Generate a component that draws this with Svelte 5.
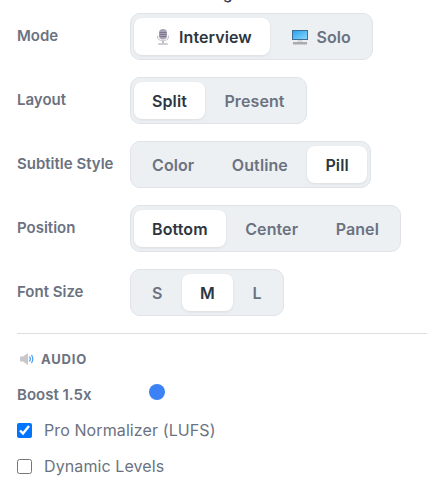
<script lang="ts">
  type Opt = { label: string; icon?: 'mic' | 'monitor' }
  type Row = { name: string; options: Opt[]; active: string }

  let rows = $state<Row[]>([
    {
      name: 'Mode',
      options: [
        { label: 'Interview', icon: 'mic' },
        { label: 'Solo', icon: 'monitor' },
      ],
      active: 'Interview',
    },
    {
      name: 'Layout',
      options: [{ label: 'Split' }, { label: 'Present' }],
      active: 'Split',
    },
    {
      name: 'Subtitle Style',
      options: [{ label: 'Color' }, { label: 'Outline' }, { label: 'Pill' }],
      active: 'Pill',
    },
    {
      name: 'Position',
      options: [{ label: 'Bottom' }, { label: 'Center' }, { label: 'Panel' }],
      active: 'Bottom',
    },
    {
      name: 'Font Size',
      options: [{ label: 'S' }, { label: 'M' }, { label: 'L' }],
      active: 'M',
    },
  ])

  let boost = $state(1.5)
  let normalizer = $state(true)
  let dynamicLevels = $state(false)
</script>

<div class="panel">
  <h2 class="title">Settings</h2>

  {#each rows as row}
    <div class="row">
      <span class="label">{row.name}</span>
      <div class="group">
        {#each row.options as opt}
          <button
            class="seg"
            class:active={row.active === opt.label}
            onclick={() => (row.active = opt.label)}
          >
            {#if opt.icon === 'mic'}
              <svg width="22" height="18" viewBox="0 0 22 18" aria-hidden="true">
                <path d="M5 8.500c0 3 2.500 4.600 6 4.600s6-1.600 6-4.600v-1h-1v1c0 2.400-2 3.700-5 3.700s-5-1.300-5-3.700v-1H5z" fill="#c9c6cf" />
                <rect x="7" y="1" width="8" height="10.500" rx="4" fill="#a8a3b5" />
                <path d="M7.500 4.500h7M7.500 6.500h7M7.500 8.500h7" stroke="#7d7689" stroke-width="1" />
                <rect x="10" y="13" width="2" height="2" fill="#bdbac4" />
                <rect x="6" y="15" width="10" height="2" rx="1" fill="#cfcdd4" />
              </svg>
            {:else if opt.icon === 'monitor'}
              <svg width="22" height="16" viewBox="0 0 22 16" aria-hidden="true">
                <defs>
                  <linearGradient id="screen" x1="0" y1="0" x2="1" y2="1">
                    <stop offset="0" stop-color="#29a4ee" />
                    <stop offset="1" stop-color="#8ad4fa" />
                  </linearGradient>
                </defs>
                <rect x="3" y="1" width="16" height="10" fill="#3f6f93" />
                <rect x="4" y="2" width="14" height="8" fill="url(#screen)" />
                <rect x="8.500" y="11" width="5" height="2" fill="#d5d8dc" />
                <rect x="4" y="13" width="14" height="2.500" fill="#a9aab3" />
              </svg>
            {/if}
            {opt.label}
          </button>
        {/each}
      </div>
    </div>
  {/each}

  <hr />

  <h3 class="section">
    <svg width="20" height="14" viewBox="0 0 20 14" aria-hidden="true">
      <path d="M3 4.500h3L11 1v12L6 9.500H3z" fill="#c8c8cc" />
      <path d="M12.500 4.500c1 1.500 1 3.500 0 5M14.500 3c1.600 2.500 1.600 5.500 0 8" fill="none" stroke="#4a9af0" stroke-width="1.200" />
    </svg>
    AUDIO
  </h3>

  <label class="boost">
    <span class="boost-label">Boost {boost}x</span>
    <input type="range" min="1" max="2" step="0.1" bind:value={boost} />
  </label>

  <label class="check">
    <input type="checkbox" bind:checked={normalizer} />
    Pro Normalizer (LUFS)
  </label>
  <label class="check">
    <input type="checkbox" bind:checked={dynamicLevels} />
    Dynamic Levels
  </label>
</div>

<style>
  :global(body) {
    background: #fff;
    overflow: hidden;
  }
  .panel {
    padding: 0 6px 0 17px;
    font-family: Inter, 'Liberation Sans', sans-serif;
    color: #6b7280;
  }
  .title {
    margin: -15px 0 10px;
    padding-right: 22px;
    height: 18px;
    font-size: 15px;
    line-height: 18px;
    font-weight: 600;
    text-align: center;
    color: #374151;
  }
  .row {
    display: flex;
    align-items: center;
    height: 47px;
    margin-bottom: 17px;
  }
  .label {
    width: 113px;
    margin-top: -2px;
    font-size: 15px;
    font-weight: 600;
  }
  .group {
    display: flex;
    gap: 1.5px;
    padding: 4px 3px;
    background: #edf0f3;
    border: 1px solid #dfe3e8;
    border-radius: 10px;
  }
  .seg {
    display: flex;
    align-items: center;
    gap: 5px;
    height: 37px;
    padding: 0 18px;
    border: none;
    border-radius: 8px;
    background: none;
    font: 600 16px Inter, 'Liberation Sans', sans-serif;
    letter-spacing: 0.1px;
    color: #6b7280;
    cursor: pointer;
  }
  .seg.active {
    background: #fff;
    color: #2d3640;
    box-shadow: 0 1px 3px rgba(0, 0, 0, 0.08);
  }
  hr {
    margin: 1px 0 0;
    border: none;
    border-top: 1px solid #dddddd;
  }
  .section {
    display: flex;
    align-items: center;
    gap: 4px;
    margin: 16px 0 0;
    font-size: 13px;
    line-height: 18px;
    font-weight: 700;
    letter-spacing: 0.8px;
  }
  .boost {
    display: flex;
    align-items: center;
    height: 20px;
    margin-top: 16px;
  }
  .boost-label {
    width: 100px;
    font-size: 15px;
    font-weight: 600;
  }
  .boost input {
    appearance: none;
    width: 80px;
    height: 16px;
    margin: 0 0 4px;
    background: none;
  }
  .boost input::-webkit-slider-thumb {
    appearance: none;
    width: 16px;
    height: 16px;
    border-radius: 50%;
    background: #3b82f6;
  }
  .check {
    display: flex;
    align-items: center;
    gap: 12px;
    height: 20px;
    margin-top: 16px;
    font-size: 16px;
    letter-spacing: 0.1px;
  }
  .check input {
    width: 15px;
    height: 15px;
    margin: 0;
  }
</style>
